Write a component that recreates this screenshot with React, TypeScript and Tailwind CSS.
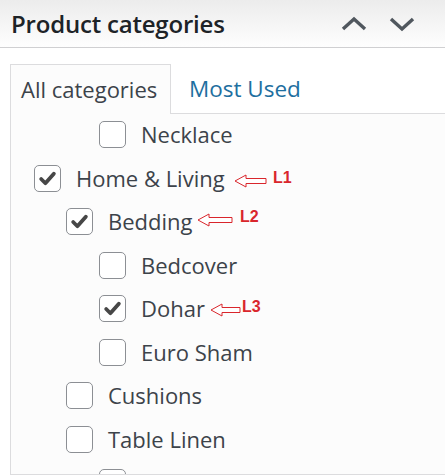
import React from "react";

type Cat = { name: string; level: number; checked?: boolean };

const cats: Cat[] = [
  { name: "Necklace", level: 2 },
  { name: "Home & Living", level: 0, checked: true },
  { name: "Bedding", level: 1, checked: true },
  { name: "Bedcover", level: 2 },
  { name: "Dohar", level: 2, checked: true },
  { name: "Euro Sham", level: 2 },
  { name: "Cushions", level: 1 },
  { name: "Table Linen", level: 1 },
  { name: "Napkins", level: 2 },
];

const indent = ["pl-[23px]", "pl-[55px]", "pl-[88px]"];

function Box({ checked }: { checked?: boolean }) {
  return (
    <span className="flex h-[27px] w-[27px] shrink-0 items-center justify-center rounded-[5px] border-[1.5px] border-[#8c8f94] bg-white">
      {checked && (
        <svg width="19" height="19" viewBox="0 0 18 18">
          <path d="M3 9.5 L7 13.5 L15 4.5" fill="none" stroke="#474747" strokeWidth="3.6" strokeLinecap="round" strokeLinejoin="round" />
        </svg>
      )}
    </span>
  );
}

function Note({ label, w, className }: { label: string; w: number; className: string }) {
  // red hollow arrow + label, drawn over the list as an annotation
  return (
    <div className={`absolute flex items-start ${className}`}>
      <svg className="mt-[4px]" width={w} height="14" viewBox={`0 0 ${w} 14`}>
        <path
          d={`M1 7 L12 1 L12 4.5 L${w - 1} 4.5 L${w - 1} 9.5 L12 9.5 L12 13 Z`}
          fill="white"
          stroke="#d9262c"
          strokeWidth="1"
        />
      </svg>
      <span className="font-['Liberation_Sans',sans-serif] text-[16px] font-bold leading-none text-[#d9262c]">{label}</span>
    </div>
  );
}

export default function App() {
  return (
    <div className="relative h-[476px] w-[445px] overflow-hidden bg-white font-['Open_Sans','Noto_Sans',sans-serif] text-[#3c434a]">
      <div className="flex h-[48px] items-center justify-between border-b border-[#d0d0d2] bg-gradient-to-b from-[#ececec] to-[#fefefe] pl-[11px] pr-[30px]">
        <h2 className="text-[24px] font-semibold tracking-[-0.2px] text-[#1d2327]">Product categories</h2>
        <div className="flex items-center gap-[22px]">
          <svg width="26" height="16" viewBox="0 0 26 16">
            <path d="M2 13 L13 3 L24 13" fill="none" stroke="#50575e" strokeWidth="3.4" />
          </svg>
          <svg width="26" height="16" viewBox="0 0 26 16">
            <path d="M2 3 L13 13 L24 3" fill="none" stroke="#50575e" strokeWidth="3.4" />
          </svg>
        </div>
      </div>

      <div className="pl-[10px] pt-[16px]">
        <div className="flex items-end border-b border-[#dcdcde]">
          <div className="-mb-px flex h-[50px] w-[161px] items-center border border-b-0 border-[#dcdcde] bg-[#fcfcfc] pl-[10px] text-[22px]">
            All categories
          </div>
          <div className="flex h-[49px] items-center pl-[18px] text-[22.5px] text-[#1e6fa0]">Most Used</div>
        </div>
        <div className="h-[361px] overflow-hidden border-b border-l border-[#dcdcde] bg-[#fcfcfc]">
          <div className="-mt-px">
            {cats.map((c) => (
              <div key={c.name} className={`flex h-[43.5px] items-center gap-[15px] text-[22px] ${indent[c.level]}`}>
                <Box checked={c.checked} />
                <span>{c.name}</span>
              </div>
            ))}
          </div>
        </div>
      </div>

      <Note label="L1" w={33} className="left-[234px] top-[170px] gap-[6px]" />
      <Note label="L2" w={36} className="left-[197px] top-[209px] gap-[7px]" />
      <Note label="L3" w={31} className="left-[210px] top-[299px] gap-[1px]" />
    </div>
  );
}
